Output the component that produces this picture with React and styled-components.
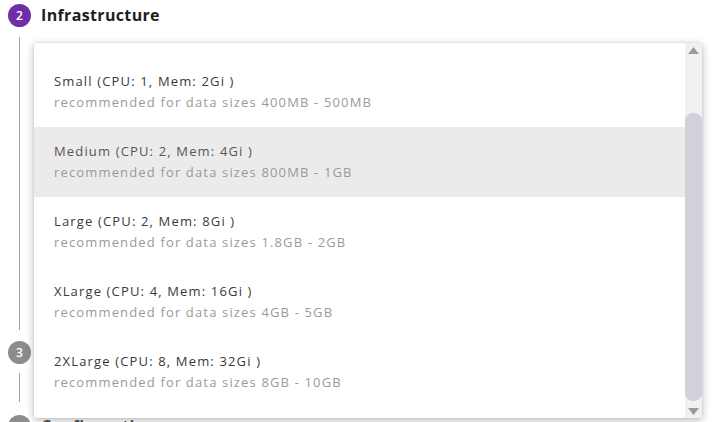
import styled, { createGlobalStyle } from "styled-components";

const GlobalStyle = createGlobalStyle`
  html, body {
    margin: 0;
    padding: 0;
    background: #ffffff;
    font-family: "Open Sans", "Liberation Sans", sans-serif;
    overflow: hidden;
  }
`;

const Page = styled.div`
  position: relative;
  width: 726px;
  height: 422px;
  overflow: hidden;
`;

const Stepper = styled.div`
  display: flex;
  flex-direction: column;
  padding: 3px 0 0 8px;
`;

const StepHead = styled.div`
  display: flex;
  align-items: center;
  gap: 10px;
  height: 24px;
`;

const StepCircle = styled.div`
  width: 23px;
  height: 23px;
  border-radius: 50%;
  background: ${(p) => (p.$active ? "#6f2ea9" : "#8c8c8c")};
  color: #ffffff;
  font-size: 12px;
  font-weight: 600;
  display: flex;
  align-items: center;
  justify-content: center;
  flex-shrink: 0;
`;

const StepTitle = styled.div`
  font-size: 16px;
  font-weight: 700;
  letter-spacing: 0.35px;
  color: ${(p) => (p.$muted ? "#555" : "#1e1e1e")};
`;

const StepBody = styled.div`
  margin: ${(p) => p.$top}px 0 ${(p) => p.$bottom}px 11px;
  height: ${(p) => p.$height}px;
  border-left: 1px solid #a5a5a5;
`;

const Menu = styled.div`
  position: absolute;
  top: 43px;
  left: 34px;
  width: 668px;
  height: 375px;
  background: #ffffff;
  border-radius: 3px;
  box-shadow: 0 2px 8px rgba(0, 0, 0, 0.28), 0 0 2px rgba(0, 0, 0, 0.12);
  display: flex;
  overflow: hidden;
`;

const OptionList = styled.div`
  flex: 1;
  display: flex;
  flex-direction: column;
  padding-top: 14px;
`;

const Option = styled.div`
  height: 70px;
  flex-shrink: 0;
  display: flex;
  flex-direction: column;
  justify-content: center;
  gap: 4px;
  padding: 0 20px;
  background: ${(p) => (p.$hover ? "#ebebeb" : "transparent")};
  letter-spacing: 1.15px;
`;

const OptionLabel = styled.div`
  font-size: 13px;
  color: ${(p) => (p.$hover ? "#555" : "#3a3a3a")};
  line-height: 17px;
`;

const OptionHint = styled.div`
  font-size: 13px;
  color: #9a9a9a;
  line-height: 17px;
`;

const Scrollbar = styled.div`
  width: 17px;
  background: #f1f1f1;
  display: flex;
  flex-direction: column;
  align-items: center;
`;

const Arrow = styled.div`
  height: 14px;
  width: 17px;
  display: flex;
  align-items: center;
  justify-content: center;
`;

const Track = styled.div`
  flex: 1;
  width: 17px;
  display: flex;
  flex-direction: column;
  justify-content: flex-end;
  padding-bottom: 3px;
`;

const Thumb = styled.div`
  width: 17px;
  height: 288px;
  border-radius: 8px;
  background: #d1d1dc;
`;

const options = [
  { name: "Small", cpu: 1, mem: "2Gi", rec: "400MB - 500MB" },
  { name: "Medium", cpu: 2, mem: "4Gi", rec: "800MB - 1GB", hover: true },
  { name: "Large", cpu: 2, mem: "8Gi", rec: "1.8GB - 2GB" },
  { name: "XLarge", cpu: 4, mem: "16Gi", rec: "4GB - 5GB" },
  { name: "2XLarge", cpu: 8, mem: "32Gi", rec: "8GB - 10GB" },
];

const Triangle = ({ up }) => (
  <svg width="11" height="7" viewBox="0 0 11 7">
    <path d={up ? "M0 7 L5.5 0 L11 7 Z" : "M0 0 L5.5 7 L11 0 Z"} fill="#9a9a9a" />
  </svg>
);

export default function App() {
  return (
    <Page>
      <GlobalStyle />
      <Stepper>
        <StepHead>
          <StepCircle $active>2</StepCircle>
          <StepTitle>Infrastructure</StepTitle>
        </StepHead>
        <StepBody $top={10} $bottom={10} $height={293} />
        <StepHead>
          <StepCircle>3</StepCircle>
          <StepTitle $muted>Storage</StepTitle>
        </StepHead>
        <StepBody $top={9} $bottom={12} $height={29} />
        <StepHead>
          <StepCircle>4</StepCircle>
          <StepTitle $muted>Configuration</StepTitle>
        </StepHead>
      </Stepper>

      <Menu>
        <OptionList>
          {options.map((o) => (
            <Option key={o.name} $hover={o.hover}>
              <OptionLabel $hover={o.hover}>
                {o.name} (CPU: {o.cpu}, Mem: {o.mem} )
              </OptionLabel>
              <OptionHint>recommended for data sizes {o.rec}</OptionHint>
            </Option>
          ))}
        </OptionList>
        <Scrollbar>
          <Arrow>
            <Triangle up />
          </Arrow>
          <Track>
            <Thumb />
          </Track>
          <Arrow>
            <Triangle />
          </Arrow>
        </Scrollbar>
      </Menu>
    </Page>
  );
}
